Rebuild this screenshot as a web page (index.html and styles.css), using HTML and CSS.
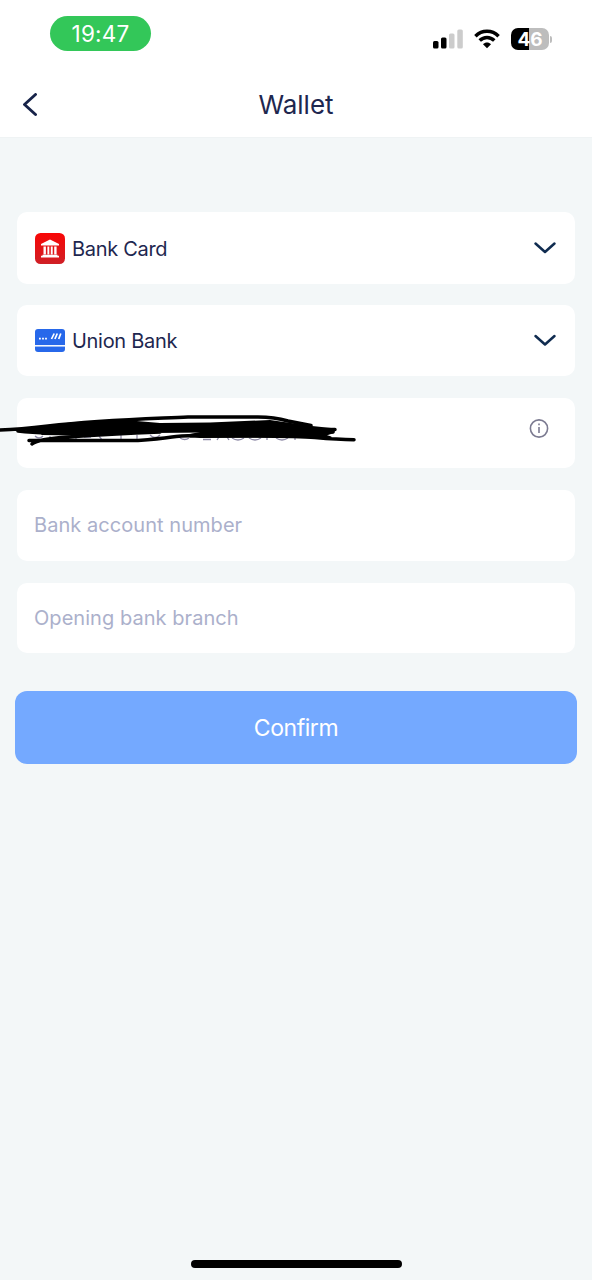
FILE: index.html
```html
<!DOCTYPE html>
<html lang="en">
<head>
<meta charset="utf-8">
<title>Wallet</title>
<link rel="stylesheet" href="styles.css">
</head>
<body>
<div class="screen">
  <header class="top">
    <div class="status">
      <span class="time">19:47</span>
      <div class="indicators">
        <svg class="signal" width="30" height="20" viewBox="0 0 30 20">
          <rect x="0" y="12" width="5.500" height="7.500" rx="1.500" fill="#000"/>
          <rect x="8" y="8.500" width="5.500" height="11" rx="1.500" fill="#000"/>
          <rect x="16" y="4.500" width="5.500" height="15" rx="1.500" fill="#ccc"/>
          <rect x="24.300" y="0.500" width="5.500" height="19" rx="1.500" fill="#ccc"/>
        </svg>
        <svg class="wifi" width="26" height="20" viewBox="0 0 26 20">
          <g fill="none" stroke="#000" stroke-width="3.500">
            <path d="M1.400 7.200C8 .7 18 .7 24.600 7.200"/>
            <path d="M5.700 11.600c4.200-4.100 10.400-4.100 14.600 0"/>
          </g>
          <path d="M13 19.300l-4-4.100c2.200-2.300 5.800-2.300 8 0z"/>
        </svg>
        <div class="battery"><span class="level">46</span><i class="cap"></i></div>
      </div>
    </div>
    <div class="nav">
      <svg class="back" width="16" height="24" viewBox="0 0 16 24"><path d="M13.500 1.500L2.500 11.500l11 10"/></svg>
      <h1>Wallet</h1>
    </div>
  </header>

  <main class="form">
    <div class="field select first">
      <svg class="icon" width="30" height="31" viewBox="0 0 30 31">
        <defs><linearGradient id="red" x1="0" y1="0" x2="0" y2="1"><stop stop-color="#f90606"/><stop offset="1" stop-color="#cf2026"/></linearGradient></defs>
        <rect width="30" height="31" rx="5.500" fill="url(#red)"/>
        <g fill="#fff">
          <path d="M15 6.500l9 4.500v1.600H6V11z"/>
          <path d="M8.500 13.500h2.400v8H8.500zM12.400 13.500h1.900v8h-1.900zM15.800 13.500h1.900v8h-1.900zM19.200 13.500h2.400v8h-2.400z"/>
          <path d="M7.500 21.700h15v1H24v1.900H6v-1.900h1.500z"/>
        </g>
      </svg>
      <span class="value">Bank Card</span>
      <svg class="chevron" width="24" height="14" viewBox="0 0 24 14"><path d="M2.500 2.500L12 11l9.500-8.500"/></svg>
    </div>
    <div class="field select">
      <svg class="icon" width="30" height="23" viewBox="0 0 30 23">
        <rect width="30" height="23" rx="3" fill="#2768ea"/>
        <path d="M0 16.800h30" stroke="#fff" stroke-width="1.500"/>
        <path d="M4 9.700h1.800M7.100 9.700h1.800M10.100 9.700h1.800" stroke="#fff" stroke-width="1.800"/>
        <path d="M16.500 10l2.700-5.500M19.900 10l2.400-5.500M23.700 10l2.100-5.500" stroke="#fff" stroke-width="1.700"/>
      </svg>
      <span class="value">Union Bank</span>
      <svg class="chevron" width="24" height="14" viewBox="0 0 24 14"><path d="M2.500 3L12 11.500 21.500 3"/></svg>
    </div>
    <div class="field holder">
      <svg class="info" width="20" height="20" viewBox="0 0 20 20">
        <circle cx="10" cy="10.500" r="8.600"/>
        <path d="M10 9v6M10 5.500v1.700"/>
      </svg>
      <svg class="scribble" width="370" height="50" viewBox="0 405 370 50">
        <path class="traces" d="M35 436q4 4 8 0M50 436v4M76 436v4M84 437h7M99 436l3 4M121 435v5M137 435v5M150 435q5 5 10 0M180 438q5 3 9 0M203 439.500h8M217 440l2-3M229 440l-2-3M232 438q6 4 12 0M249 438q6 4 12 0M267 437v3M276 438q6 4 12 0M295 437v3"/>
        <path class="mass" d="M17 430L48 425 75 422 125 420 160 423 210 422.500 270 420 312 426 336 428.500 334 433 325 436 300 437 250 437.500 200 438 185 435 205 431 150 432 120 434.500 75 435.500 42 435 38 432Z"/>
        <path class="pen" d="M-2 430Q18 429.500 48 426C100 420 145 419 188 417H258Q274 417 288 421L311 425.500M18 431Q40 434 78 432L335 429.500M29 440.500H138Q158 439 172 437T245 434L333 432M32 444Q38 439 68 437Q110 434 160 432M190 436Q292 435.500 315 437.500T354 439.800M314 433L330 438"/>
      </svg>
    </div>
    <div class="field"><span class="placeholder">Bank account number</span></div>
    <div class="field"><span class="placeholder">Opening bank branch</span></div>
    <div class="confirm">Confirm</div>
  </main>
  <div class="home"></div>
</div>
</body>
</html>
```
FILE: styles.css
```css
* { box-sizing: border-box; }
body { margin: 0; font-family: Inter, "Liberation Sans", sans-serif; color: #1e274f; background: #f3f7f8; }
.screen { width: 592px; height: 1280px; display: flex; flex-direction: column; overflow: hidden; }
.top { height: 138px; background: #fff; border-bottom: 1px solid #eff3f4; }
.status { height: 71px; padding: 16px 40px 0 50px; display: flex; justify-content: space-between; align-items: flex-start; }
.time { width: 101px; height: 35px; border-radius: 18px; background: #33c759; color: #fff; font-size: 22.500px; line-height: 36px; text-align: center; letter-spacing: 0.200px; }
.indicators { display: flex; align-items: center; padding-top: 12px; }
.signal { margin-right: 11px; }
.wifi { margin-right: 11px; }
.battery { display: flex; align-items: center; gap: 1px; }
.level { width: 38px; height: 22px; border-radius: 7px; background: linear-gradient(90deg, #000 48%, #bdbdbd 48%); color: #fff; font-weight: 700; font-size: 19px; line-height: 23px; text-align: center; }
.cap { width: 2px; height: 7px; border-radius: 0 3px 3px 0; background: #bdbdbd; }
.nav { height: 67px; padding: 0 22px; display: grid; grid-template-columns: 16px 1fr 16px; align-items: center; }
.back, .chevron { fill: none; stroke: #172349; stroke-width: 2.900; stroke-linecap: round; stroke-linejoin: round; }
h1 { margin: 0; padding-top: 1px; text-align: center; font-size: 26px; font-weight: 400; line-height: 32px; letter-spacing: 0; }
.form { flex: 1; padding: 74px 15px 0; }
.field { height: 70.500px; margin: 0 2px 22px; padding: 0 18px 0 17px; border-radius: 10px; background: #fff; display: flex; align-items: center; }
.first { height: 72px; margin-bottom: 21px; }
.icon { margin-left: 1px; margin-right: 7px; flex: none; }
.value { padding-top: 2px; font-size: 20px; line-height: 28px; letter-spacing: -0.300px; }
.chevron { margin-left: auto; stroke: #102c50; stroke-width: 2.500; }
.holder { position: relative; justify-content: flex-end; padding: 0 26px 10px; }
.info { fill: none; stroke: #7c7b91; stroke-width: 1.600; }
.scribble { position: absolute; left: -17px; top: 7px; }
.traces { fill: none; stroke: #8e8aa6; stroke-width: 1.300; }
.mass { fill: #000; }
.pen { fill: none; stroke: #000; stroke-width: 3.500; stroke-linecap: round; stroke-linejoin: round; }
.placeholder { color: #abb0cb; font-size: 20px; letter-spacing: 0.050px; }
.confirm { height: 73px; margin-top: 38px; border-radius: 12px; background: #74a9ff; color: #fff; font-size: 23px; line-height: 75px; letter-spacing: -0.450px; text-align: center; }
.home { width: 211px; height: 8px; margin: 0 auto 12px; border-radius: 4px; background: #000; }
```
